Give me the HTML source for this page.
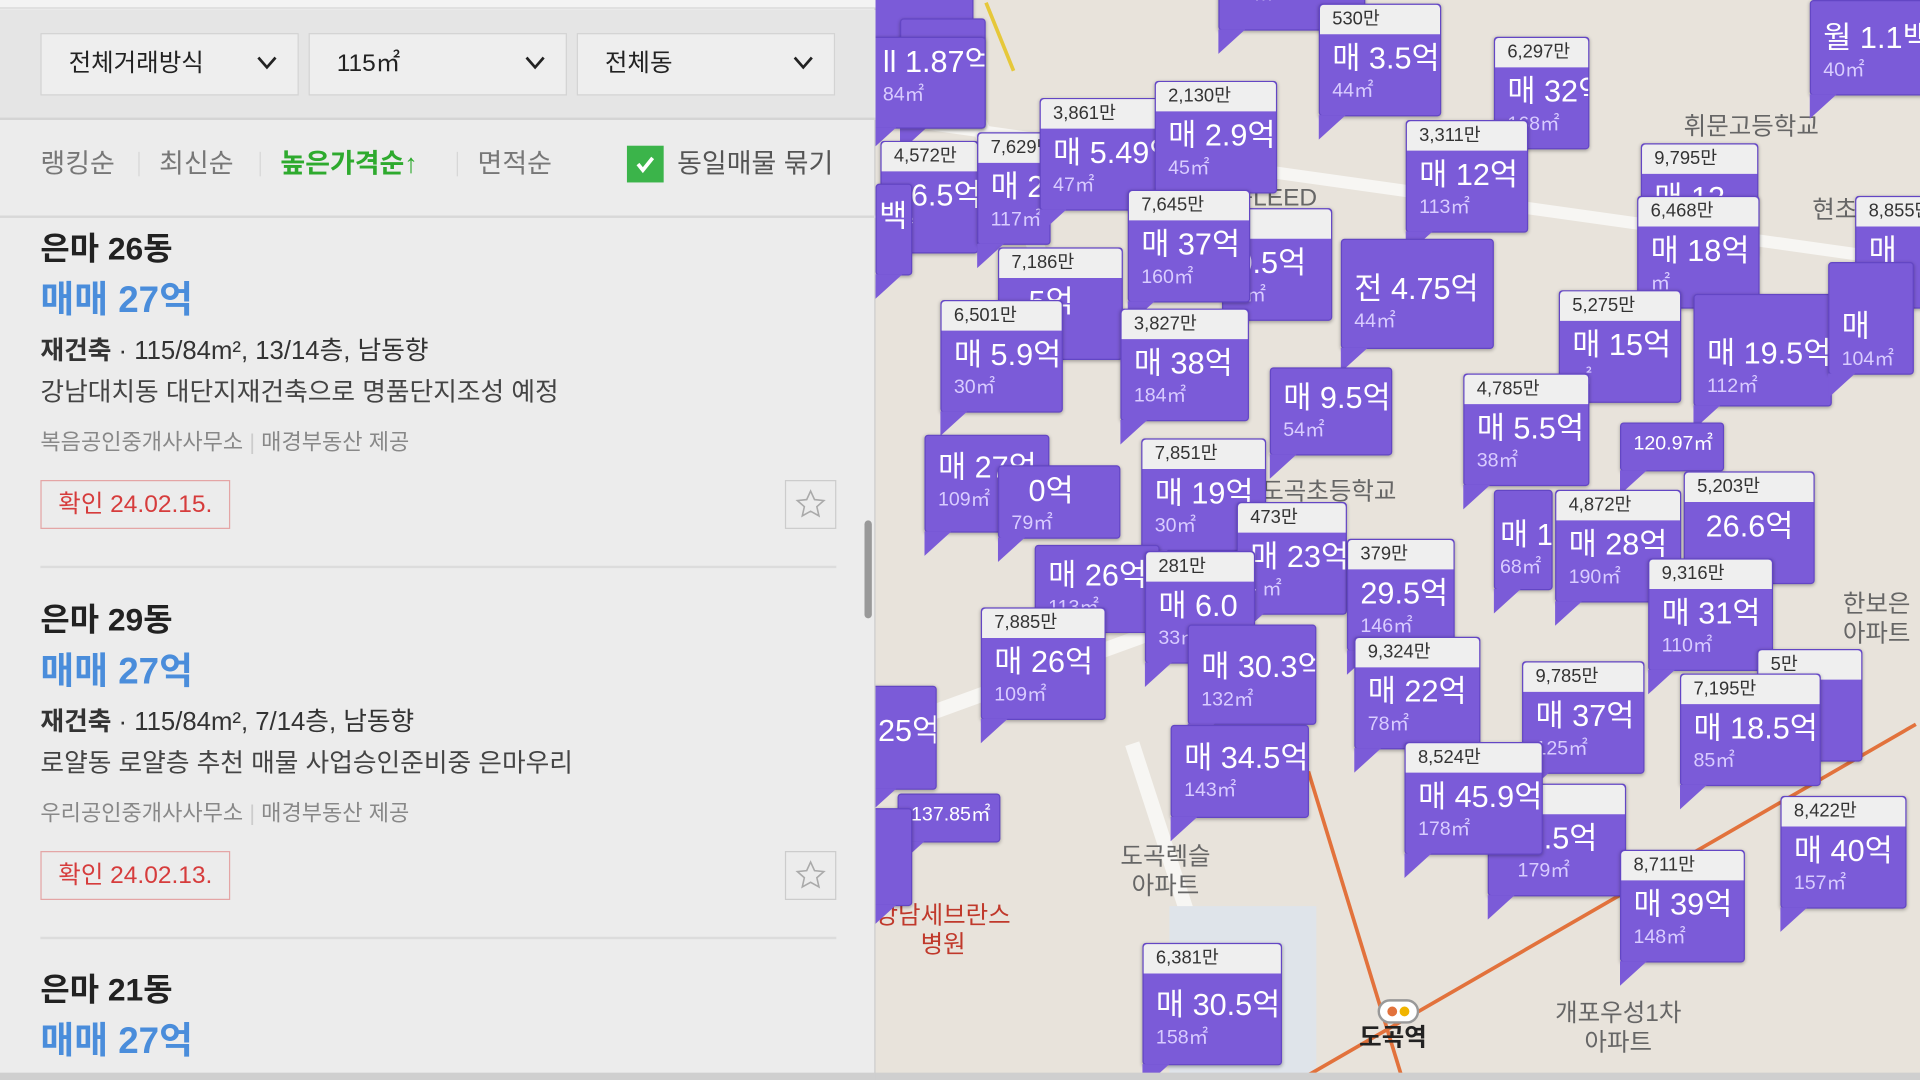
<!DOCTYPE html>
<html><head><meta charset="utf-8"><style>
*{margin:0;padding:0;box-sizing:border-box}
body{width:1920px;height:1080px;overflow:hidden;background:#e8e3db;font-family:"Liberation Sans","Noto Sans CJK KR",sans-serif}
#w{position:absolute;left:0;top:0;width:1568px;height:882px;transform:scale(1.22449);transform-origin:0 0;overflow:hidden}
#map{position:absolute;left:715px;top:0;width:853px;height:882px;background:#e8e3db;overflow:hidden}
.rd{position:absolute;background:#f7f6f3}
.m{position:absolute;background:#7b5bd8;border:1px solid #6346c4;border-radius:3px;box-shadow:0 1px 3px rgba(0,0,0,.3)}
.m::after{content:"";position:absolute;left:-1px;bottom:-20px;border-top:20px solid #7b5bd8;border-right:22px solid transparent}
.m .l{height:24px;background:#efefef;color:#333;font-size:15px;line-height:24px;padding-left:10px;border-radius:3px 3px 0 0;white-space:nowrap;overflow:hidden}
.m .b{padding:4px 10px 8px;color:#fff;white-space:nowrap;overflow:hidden}
.m b{display:block;font-weight:normal;font-size:25px;line-height:32px}
.m i{display:block;font-style:normal;font-size:16px;line-height:22px;color:#d9ccff}
.ml{position:absolute;color:#666;font-size:20px;text-align:center;line-height:24px}
#lp{position:absolute;left:0;top:0;width:715px;height:882px;background:#ececec;border-right:1px solid #ccc}
.dd{position:absolute;top:27px;height:51px;width:211px;background:#eeeeee;border:1px solid #d3d3d3;font-size:20px;color:#222;line-height:49px;padding-left:22px}
.dd svg{position:absolute;right:16px;top:17px}
.so{position:absolute;top:118px;font-size:22px;color:#777;line-height:32px}
.sep{position:absolute;top:124px;width:1px;height:20px;background:#d6d6d6}
.it{position:absolute;left:33px;width:650px}
.t1{font-size:26px;font-weight:bold;color:#222;line-height:32px}
.t2{font-size:30px;color:#4a8ddb;line-height:40px;margin-top:7px;font-weight:bold}
.t3{font-size:21px;color:#333;line-height:30px;margin-top:6px}
.t4{font-size:21px;color:#444;line-height:30px;margin-top:4px}
.t5{font-size:18px;color:#888;line-height:26px;margin-top:12px}
.bd{position:absolute;left:0;top:205px;width:155px;height:40px;border:1px solid #e4a5a5;color:#d63c3c;font-size:20px;line-height:38px;text-align:center}
.st{position:absolute;left:608px;top:205px;width:42px;height:40px;border:1px solid #ccc;text-align:center}
</style></head><body><div id="w">
<div id="map">
<div class="rd" style="left:100px;top:0;width:14px;height:300px;transform:rotate(-25deg)"></div>
<div class="rd" style="left:0;top:150px;width:853px;height:10px;transform:rotate(8deg)"></div>
<div class="rd" style="left:0;top:520px;width:400px;height:12px;transform:rotate(-20deg)"></div>
<div class="rd" style="left:250px;top:600px;width:12px;height:300px;transform:rotate(-18deg)"></div>
<div style="position:absolute;left:240px;top:740px;width:120px;height:142px;background:#dfe4ea"></div>
<div style="position:absolute;left:352px;top:630px;width:3px;height:270px;background:#e2723c;transform:rotate(-17deg);transform-origin:top"></div>
<div style="position:absolute;left:330px;top:890px;width:600px;height:3px;background:#e2723c;transform:rotate(-30deg);transform-origin:left"></div>
<div style="position:absolute;left:100px;top:0;width:3px;height:60px;background:#e6c83a;transform:rotate(-22deg)"></div>
<div class="ml" style="left:660px;top:92px">휘문고등학교</div>
<div class="ml" style="left:765px;top:160px">현초등학</div>
<div class="ml" style="left:790px;top:482px">한보은<br>아파트</div>
<div class="ml" style="left:200px;top:688px">도곡렉슬<br>아파트</div>
<div class="ml" style="left:0;top:736px;color:#c0392b">강남세브란스<br>병원</div>
<div class="ml" style="left:555px;top:816px">개포우성1차<br>아파트</div>
<div style="position:absolute;left:410px;top:816px;width:34px;height:20px;border:2px solid #999;border-radius:10px;background:#fff"><span style="position:absolute;left:6px;top:4px;width:8px;height:8px;border-radius:4px;background:#e2723c"></span><span style="position:absolute;left:16px;top:4px;width:8px;height:8px;border-radius:4px;background:#f0b400"></span></div>
<div class="ml" style="left:395px;top:836px;color:#222;font-weight:bold">도곡역</div>
<div class="ml" style="left:290px;top:150px">구LEED</div>
<div class="ml" style="left:315px;top:390px">도곡초등학교</div>
</div>
<div style="position:absolute;left:715px;top:0;width:853px;height:882px">
<div class="m" style="left:-10px;top:-20px;width:90px;height:80px"></div>
<div class="m" style="left:20px;top:15px;width:70px;height:90px"><div class="b" style="padding-top:28px"><b>1.87억</b></div></div>
<div class="m" style="left:-5px;top:30px;width:95px;height:75px"><div class="b"><b>ll 1.87억</b><i>84㎡</i></div></div>
<div class="m" style="left:280px;top:-20px;width:120px;height:45px"><div class="b"><i>39㎡</i></div></div>
<div class="m" style="left:362px;top:3px;width:100px"><div class="l">530만</div><div class="b"><b>매 3.5억</b><i>44㎡</i></div></div>
<div class="m" style="left:505px;top:30px;width:78px"><div class="l">6,297만</div><div class="b"><b>매 32억</b><i>168㎡</i></div></div>
<div class="m" style="left:763px;top:0;width:95px;height:78px"><div class="b" style="padding-top:14px"><b>월 1.1백</b><i>40㎡</i></div></div>
<div class="m" style="left:4px;top:115px;width:80px"><div class="l">4,572만</div><div class="b"><b>16.5억</b><i>㎡</i></div></div>
<div class="m" style="left:83px;top:108px;width:60px"><div class="l">7,629만</div><div class="b"><b>매 27</b><i>117㎡</i></div></div>
<div class="m" style="left:134px;top:80px;width:100px"><div class="l">3,861만</div><div class="b"><b>매 5.49억</b><i>47㎡</i></div></div>
<div class="m" style="left:228px;top:66px;width:100px"><div class="l">2,130만</div><div class="b"><b>매 2.9억</b><i>45㎡</i></div></div>
<div class="m" style="left:433px;top:98px;width:100px"><div class="l">3,311만</div><div class="b"><b>매 12억</b><i>113㎡</i></div></div>
<div class="m" style="left:625px;top:117px;width:96px"><div class="l">9,795만</div><div class="b"><b>매 12</b><i>113㎡</i></div></div>
<div class="m" style="left:622px;top:160px;width:100px"><div class="l">6,468만</div><div class="b"><b>매 18억</b><i>㎡</i></div></div>
<div class="m" style="left:800px;top:160px;width:60px"><div class="l">8,855만</div><div class="b"><b>매</b><i>112</i></div></div>
<div class="m" style="left:0px;top:150px;width:30px;height:75px"><div class="b" style="padding:10px 2px"><b>백</b></div></div>
<div class="m" style="left:100px;top:202px;width:102px"><div class="l">7,186만</div><div class="b"><b>&nbsp;&nbsp;5억</b><i>&nbsp;</i></div></div>
<div class="m" style="left:283px;top:170px;width:90px"><div class="l">&nbsp;</div><div class="b"><b>0.5억</b><i>5㎡</i></div></div>
<div class="m" style="left:206px;top:155px;width:100px"><div class="l">7,645만</div><div class="b"><b>매 37억</b><i>160㎡</i></div></div>
<div class="m" style="left:380px;top:195px;width:125px;height:90px"><div class="b" style="padding-top:24px"><b>전 4.75억</b><i>44㎡</i></div></div>
<div class="m" style="left:558px;top:237px;width:100px"><div class="l">5,275만</div><div class="b"><b>매 15억</b><i>㎡</i></div></div>
<div class="m" style="left:668px;top:240px;width:113px;height:92px"><div class="b" style="padding-top:32px"><b>매 19.5억</b><i>112㎡</i></div></div>
<div class="m" style="left:778px;top:214px;width:70px;height:92px"><div class="b" style="padding-top:36px"><b>매</b><i>104㎡</i></div></div>
<div class="m" style="left:200px;top:252px;width:105px"><div class="l">3,827만</div><div class="b"><b>매 38억</b><i>184㎡</i></div></div>
<div class="m" style="left:53px;top:245px;width:100px"><div class="l">6,501만</div><div class="b"><b>매 5.9억</b><i>30㎡</i></div></div>
<div class="m" style="left:322px;top:300px;width:100px;height:72px"><div class="b" style="padding-top:8px"><b>매 9.5억</b><i>54㎡</i></div></div>
<div class="m" style="left:480px;top:305px;width:103px"><div class="l">4,785만</div><div class="b"><b>매 5.5억</b><i>38㎡</i></div></div>
<div class="m" style="left:608px;top:345px;width:85px;height:40px"><div class="b" style="padding-top:6px"><i style="color:#fff">120.97㎡</i></div></div>
<div class="m" style="left:40px;top:355px;width:102px;height:80px"><div class="b" style="padding-top:10px"><b>매 27억</b><i>109㎡</i></div></div>
<div class="m" style="left:100px;top:380px;width:100px;height:60px"><div class="b"><b>&nbsp;&nbsp;0억</b><i>79㎡</i></div></div>
<div class="m" style="left:217px;top:358px;width:102px"><div class="l">7,851만</div><div class="b"><b>매 19억</b><i>30㎡</i></div></div>
<div class="m" style="left:660px;top:385px;width:107px"><div class="l">5,203만</div><div class="b"><b>&nbsp;26.6억</b><i>&nbsp;</i></div></div>
<div class="m" style="left:505px;top:400px;width:48px;height:82px"><div class="b" style="padding:20px 4px"><b>매 1</b><i>68㎡</i></div></div>
<div class="m" style="left:555px;top:400px;width:103px"><div class="l">4,872만</div><div class="b"><b>매 28억</b><i>190㎡</i></div></div>
<div class="m" style="left:295px;top:410px;width:90px"><div class="l">473만</div><div class="b"><b>매 23억</b><i>- ㎡</i></div></div>
<div class="m" style="left:385px;top:440px;width:88px"><div class="l">379만</div><div class="b"><b>29.5억</b><i>146㎡</i></div></div>
<div class="m" style="left:130px;top:445px;width:102px;height:72px"><div class="b" style="padding-top:8px"><b>매 26억</b><i>113㎡</i></div></div>
<div class="m" style="left:220px;top:450px;width:90px"><div class="l">281만</div><div class="b"><b>매 6.0</b><i>33㎡</i></div></div>
<div class="m" style="left:631px;top:456px;width:102px"><div class="l">9,316만</div><div class="b"><b>매 31억</b><i>110㎡</i></div></div>
<div class="m" style="left:86px;top:496px;width:102px"><div class="l">7,885만</div><div class="b"><b>매 26억</b><i>109㎡</i></div></div>
<div class="m" style="left:255px;top:510px;width:105px;height:82px"><div class="b" style="padding-top:18px"><b>매 30.3억</b><i>132㎡</i></div></div>
<div class="m" style="left:391px;top:520px;width:103px"><div class="l">9,324만</div><div class="b"><b>매 22억</b><i>78㎡</i></div></div>
<div class="m" style="left:528px;top:540px;width:100px"><div class="l">9,785만</div><div class="b"><b>매 37억</b><i>125㎡</i></div></div>
<div class="m" style="left:720px;top:530px;width:86px"><div class="l">5만</div><div class="b"><b>&nbsp;&nbsp;억</b><i>&nbsp;</i></div></div>
<div class="m" style="left:657px;top:550px;width:115px"><div class="l">7,195만</div><div class="b"><b>매 18.5억</b><i>85㎡</i></div></div>
<div class="m" style="left:241px;top:592px;width:113px;height:76px"><div class="b" style="padding-top:10px"><b>매 34.5억</b><i>143㎡</i></div></div>
<div class="m" style="left:500px;top:640px;width:113px"><div class="l">만</div><div class="b"><b>&nbsp;&nbsp;&nbsp;6.5억</b><i>&nbsp;&nbsp;&nbsp;179㎡</i></div></div>
<div class="m" style="left:432px;top:606px;width:113px"><div class="l">8,524만</div><div class="b"><b>매 45.9억</b><i>178㎡</i></div></div>
<div class="m" style="left:18px;top:648px;width:84px;height:40px"><div class="b" style="padding-top:6px"><i style="color:#fff">137.85㎡</i></div></div>
<div class="m" style="left:608px;top:694px;width:102px"><div class="l">8,711만</div><div class="b"><b>매 39억</b><i>148㎡</i></div></div>
<div class="m" style="left:739px;top:650px;width:103px"><div class="l">8,422만</div><div class="b"><b>매 40억</b><i>157㎡</i></div></div>
<div class="m" style="left:218px;top:770px;width:114px;height:100px"><div class="l">6,381만</div><div class="b" style="padding-top:10px"><b>매 30.5억</b><i>158㎡</i></div></div>
<div class="m" style="left:-5px;top:560px;width:55px;height:85px"><div class="b" style="padding:20px 6px"><b>25억</b></div></div>
<div class="m" style="left:-5px;top:660px;width:35px;height:80px"></div>
</div>
<div style="position:absolute;left:0;top:876px;width:1568px;height:6px;background:#cfcfcf"></div>
<div id="lp">
<div style="position:absolute;left:0;top:0;width:715px;height:7px;background:#f3f3f3;border-bottom:1px solid #d6d6d6"></div>
<div style="position:absolute;left:0;top:8px;width:715px;height:90px;background:#e5e5e5;border-bottom:2px solid #d4d4d4"></div>
<div class="dd" style="left:33px">전체거래방식<svg width="18" height="12"><path d="M2 2l7 8 7-8" stroke="#222" stroke-width="2.2" fill="none"/></svg></div>
<div class="dd" style="left:252px">115㎡<svg width="18" height="12"><path d="M2 2l7 8 7-8" stroke="#222" stroke-width="2.2" fill="none"/></svg></div>
<div class="dd" style="left:471px">전체동<svg width="18" height="12"><path d="M2 2l7 8 7-8" stroke="#222" stroke-width="2.2" fill="none"/></svg></div>
<div class="so" style="left:33px">랭킹순</div><div class="sep" style="left:113px"></div>
<div class="so" style="left:130px">최신순</div><div class="sep" style="left:212px"></div>
<div class="so" style="left:229px;color:#2eaa2e;font-weight:bold">높은가격순↑</div><div class="sep" style="left:373px"></div>
<div class="so" style="left:390px">면적순</div>
<div style="position:absolute;left:512px;top:119px;width:30px;height:30px;background:#3bb44a"><svg width="30" height="30"><path d="M9 15l4 5 8-10" stroke="#fff" stroke-width="3" fill="none"/></svg></div>
<div class="so" style="left:553px;color:#555">동일매물 묶기</div>
<div style="position:absolute;left:0;top:176px;width:715px;height:2px;background:#d8d8d8"></div>
<div class="it" style="top:187px"><div class="t1">은마 26동</div><div class="t2">매매 27억</div><div class="t3"><b>재건축</b> · 115/84m², 13/14층, 남동향</div><div class="t4">강남대치동 대단지재건축으로 명품단지조성 예정</div><div class="t5">복음공인중개사사무소 <span style="color:#ccc">|</span> 매경부동산 제공</div><div class="bd">확인 24.02.15.</div><div class="st"><svg width="26" height="26" style="margin-top:6px"><path d="M13 2l3.2 7 7.6.8-5.7 5 1.7 7.5L13 18.5 6.2 22.3l1.7-7.5-5.7-5 7.6-.8z" stroke="#aaa" stroke-width="1.3" fill="none"/></svg></div></div>
<div style="position:absolute;left:33px;top:462px;width:650px;height:2px;background:#dcdcdc"></div>
<div class="it" style="top:490px"><div class="t1">은마 29동</div><div class="t2">매매 27억</div><div class="t3"><b>재건축</b> · 115/84m², 7/14층, 남동향</div><div class="t4">로얄동 로얄층 추천 매물 사업승인준비중 은마우리</div><div class="t5">우리공인중개사사무소 <span style="color:#ccc">|</span> 매경부동산 제공</div><div class="bd">확인 24.02.13.</div><div class="st"><svg width="26" height="26" style="margin-top:6px"><path d="M13 2l3.2 7 7.6.8-5.7 5 1.7 7.5L13 18.5 6.2 22.3l1.7-7.5-5.7-5 7.6-.8z" stroke="#aaa" stroke-width="1.3" fill="none"/></svg></div></div>
<div style="position:absolute;left:33px;top:765px;width:650px;height:2px;background:#dcdcdc"></div>
<div class="it" style="top:792px"><div class="t1">은마 21동</div><div class="t2">매매 27억</div></div>
<div style="position:absolute;left:706px;top:425px;width:6px;height:80px;background:#999;border-radius:3px"></div>
<div style="position:absolute;left:0;top:876px;width:715px;height:6px;background:#cfcfcf"></div>
</div>
</div></body></html>
